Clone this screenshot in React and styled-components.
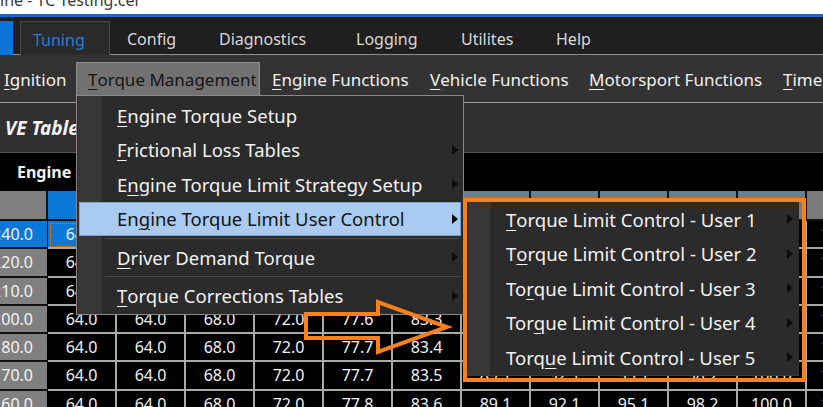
import React from 'react';
import styled, { createGlobalStyle } from 'styled-components';

// global
const GlobalStyle = createGlobalStyle`
    html, body {
        margin: 0;
        padding: 0;
        background: #2f2f2f;
    }
    body {
        font-family: "Noto Sans", "Open Sans", sans-serif;
    }
`;

// layout
const Page = styled.div`
    position: relative;
    width: 823px;
    height: 407px;
    overflow: hidden;
    background: #2f2f2f;
    display: flex;
    flex-direction: column;
`;

const TitleBar = styled.div`
    flex: none;
    height: 14px;
    background: #ffffff;
    overflow: hidden;
    color: #3a3a3a;
    font-size: 16px;
    line-height: 14px;

    span {
        display: block;
        margin-top: -7px;
        white-space: nowrap;
    }
`;

const AccentLine = styled.div`
    flex: none;
    height: 3px;
    background: #1b6ac9;
`;

// tabs
const TabBar = styled.div`
    flex: none;
    height: 38px;
    box-sizing: border-box;
    display: flex;
    align-items: flex-end;
    background: #1f1f1f;
    border-bottom: 1px solid #8e8e8e;
`;

const AppButton = styled.div`
    width: 13px;
    height: 34px;
    margin: 0 7px -1px 0;
    background: #0a74da;
`;

const Tab = styled.div`
    box-sizing: border-box;
    width: ${p => p.$w}px;
    height: 34px;
    padding: 3px 0 0 ${p => p.$pl || 12}px;
    display: flex;
    align-items: center;
    font-size: 16px;
    color: ${p => (p.$active ? '#2a7fd4' : '#d8d8d8')};
    background: ${p => (p.$active ? '#2a2a2a' : 'transparent')};
    border: 1px solid ${p => (p.$active ? '#474747' : 'transparent')};
    border-bottom: none;
    margin-bottom: ${p => (p.$active ? '-1px' : '0')};
    white-space: nowrap;
`;

// ribbon
const Ribbon = styled.div`
    flex: none;
    height: 48px;
    box-sizing: border-box;
    padding-top: 7px;
    display: flex;
    align-items: flex-start;
    background: #333333;
    border-bottom: 1px solid #9c9c9c;
    margin-left: -8px;
`;

const RibbonItem = styled.div`
    box-sizing: border-box;
    flex: none;
    width: ${p => (p.$w ? `${p.$w}px` : 'auto')};
    height: 34px;
    padding-left: 11px;
    display: flex;
    align-items: center;
    font-size: 17px;
    white-space: nowrap;
    color: ${p => (p.$active ? '#151515' : '#f0f0f0')};
    background: ${p => (p.$active ? '#727272' : 'transparent')};
    border: 1px solid ${p => (p.$active ? '#8f8f8f' : 'transparent')};
    border-bottom: none;
`;

const TableTitle = styled.div`
    flex: none;
    height: 50px;
    box-sizing: border-box;
    padding-left: 5px;
    display: flex;
    align-items: center;
    background: #303030;
    border-bottom: 1px solid #555555;
    color: #f4f4f4;
    font-size: 19px;
    font-weight: bold;
    font-style: italic;
`;

const AxisBar = styled.div`
    flex: none;
    height: 38px;
    padding-left: 17px;
    display: flex;
    align-items: center;
    background: #000000;
    color: #f4f4f4;
    font-size: 16px;
    font-weight: bold;
`;

// table
const Grid = styled.div`
    flex: none;
    width: 876px;
    display: grid;
    grid-template-columns: 48px repeat(12, 69px);
    grid-template-rows: 30px;
    grid-auto-rows: 28.25px;
    background: #000000;
    font-size: 16px;
`;

const HeadCell = styled.div`
    box-sizing: border-box;
    background: ${p => (p.$sel ? '#0a78d7' : p.$corner ? '#808080' : '#7b7b7b')};
    border-right: 2px solid #111111;
    border-bottom: 2px solid #111111;
`;

const RowHead = styled.div`
    box-sizing: border-box;
    overflow: hidden;
    display: flex;
    align-items: center;
    justify-content: flex-end;
    padding-right: 14px;
    background: ${p => (p.$sel ? '#0a78d7' : '#808080')};
    border-right: 1px solid #000000;
    border-bottom: 2px solid #101010;
    color: #f2f2f2;
    white-space: nowrap;
`;

const Cell = styled.div`
    box-sizing: border-box;
    display: flex;
    align-items: center;
    justify-content: center;
    background: ${p => (p.$sel ? '#0a78d7' : '#000000')};
    border-right: 2px solid #a8a8a8;
    border-bottom: 2px solid #a8a8a8;
    outline: ${p => (p.$sel ? '1px dotted #c7863c' : 'none')};
    outline-offset: -3px;
    color: ${p => (p.$dim ? '#2440a8' : '#f2f2f2')};
`;

// menus
const Menu = styled.div`
    position: absolute;
    left: 76px;
    top: 95px;
    z-index: 3;
    width: 388px;
    box-sizing: border-box;
    padding: 2px 0 1px;
    background: linear-gradient(to right, #2b2b2b 0 1px, #373737 1px 25px, #2b2b2b 25px);
    border: 1px solid #8e8585;
`;

const MenuItem = styled.div`
    box-sizing: border-box;
    height: 34.5px;
    margin: 0 ${p => (p.$active ? '2px' : '0')};
    padding: 0 ${p => (p.$active ? '2px' : '5px')} 0 ${p => (p.$active ? '37px' : '40px')};
    display: flex;
    align-items: center;
    font-size: 18.5px;
    white-space: nowrap;
    color: ${p => (p.$active ? '#141414' : '#f2f2f2')};
    background: ${p => (p.$active ? '#a9cbf1' : 'transparent')};
    border: ${p => (p.$active ? '1px solid #7ea2d4' : 'none')};
`;

const Separator = styled.div`
    height: 1px;
    margin: 1.5px 3px 1.5px 28px;
    background: #4a4a4a;
`;

const SubArrow = styled.span`
    margin-left: auto;
    width: 0;
    height: 0;
    border-left: 6px solid #0c0c0c;
    border-top: 5px solid transparent;
    border-bottom: 5px solid transparent;
`;

const Highlight = styled.div`
    position: absolute;
    left: 463px;
    top: 198px;
    z-index: 4;
    width: 343px;
    height: 184px;
    box-sizing: border-box;
    border: 4px solid #f7811f;
`;

const SubMenu = styled.div`
    width: 332px;
    background: linear-gradient(to right, #2b2b2b 0 1px, #373737 1px 23px, #2b2b2b 23px);
    border-bottom: 1px solid #3c3c3c;
`;

const SubItem = styled.div`
    box-sizing: border-box;
    height: 34.5px;
    padding: 0 6px 0 39px;
    display: flex;
    align-items: center;
    font-size: 18.5px;
    white-space: nowrap;
    color: #f2f2f2;
`;

const Annotation = styled.svg`
    position: absolute;
    left: 0;
    top: 0;
    z-index: 5;
    pointer-events: none;
`;

const Key = styled.span`
    text-decoration: underline;
    text-decoration-thickness: 1px;
    text-underline-offset: 3px;
`;

// data
const tabs = [
    { label: 'Tuning', w: 90, active: true },
    { label: 'Config', w: 96, pl: 16 },
    { label: 'Diagnostics', w: 137 },
    { label: 'Logging', w: 105 },
    { label: 'Utilites', w: 95 },
    { label: 'Help', w: 80 },
];

const ribbon = [
    { label: 'Ignition', k: 0, w: 84 },
    { label: 'Torque Management', k: 0, w: 184, active: true },
    { label: 'Engine Functions', k: 0, w: 158 },
    { label: 'Vehicle Functions', k: 0, w: 159 },
    { label: 'Motorsport Functions', k: 0, w: 194 },
    { label: 'Timers', k: 0 },
];

const menu = [
    { label: 'Engine Torque Setup', k: 0 },
    { label: 'Frictional Loss Tables', k: 0, sub: true },
    { label: 'Engine Torque Limit Strategy Setup', k: 1, sub: true },
    { label: 'Engine Torque Limit User Control', k: 2, sub: true, active: true },
    { sep: true },
    { label: 'Driver Demand Torque', k: 0, sub: true },
    { sep: true },
    { label: 'Torque Corrections Tables', k: 0, sub: true },
];

const subMenu = [0, 1, 2, 3, 4].map(i => ({ label: `Torque Limit Control - User ${i + 1}`, k: i }));

const cols = ['500', '750', '1000', '1250', '1500', '1750', '2000', '2500', '3000', '3500', '4000', '4500'];

const tail = [89.1, 92.1, 95.1, 98.2, 100.0, 100.0];
const rows = [
    { load: '240.0', v: [64.0, 64.0, 68.0, 72.0, 77.6, 83.2, 89.0, 92.0, 95.0, 98.1, 100.0, 100.0] },
    { load: '220.0', v: [64.0, 64.0, 68.0, 72.0, 77.6, 83.2, 89.0, 92.0, 95.0, 98.1, 100.0, 100.0] },
    { load: '210.0', v: [64.0, 64.0, 68.0, 72.0, 77.6, 83.2, 89.0, 92.0, 95.0, 98.1, 100.0, 100.0] },
    { load: '200.0', v: [64.0, 64.0, 68.0, 72.0, 77.6, 83.3, 89.0, 92.0, 95.0, 98.1, 100.0, 100.0] },
    { load: '180.0', v: [64.0, 64.0, 68.0, 72.0, 77.7, 83.4, 89.0, 92.1, 95.1, 98.2, 100.0, 100.0] },
    { load: '170.0', v: [64.0, 64.0, 68.0, 72.0, 77.7, 83.5, ...tail] },
    { load: '160.0', v: [64.0, 64.0, 68.0, 72.0, 77.8, 83.6, ...tail] },
];

function Label({ text, k }) {
    if (k == null) return text;
    return <>{text.slice(0, k)}<Key>{text[k]}</Key>{text.slice(k + 1)}</>;
}

export default function App() {
    return <>
        <GlobalStyle />
        <Page>
            <TitleBar><span>ine - TC Testing.cer</span></TitleBar>
            <AccentLine />

            <TabBar>
                <AppButton />
                {tabs.map(t => (
                    <Tab key={t.label} $w={t.w} $pl={t.pl} $active={t.active}>{t.label}</Tab>
                ))}
            </TabBar>

            <Ribbon>
                {ribbon.map(r => (
                    <RibbonItem key={r.label} $w={r.w} $active={r.active}>
                        <Label text={r.label} k={r.k} />
                    </RibbonItem>
                ))}
            </Ribbon>

            <TableTitle>VE Table</TableTitle>
            <AxisBar>Engine Speed (RPM)</AxisBar>

            <Grid>
                <HeadCell $corner />
                {cols.map((c, i) => <HeadCell key={c} $sel={i === 0} title={c} />)}
                {rows.map((r, ri) => (
                    <React.Fragment key={r.load}>
                        <RowHead $sel={ri === 0}>{r.load}</RowHead>
                        {r.v.map((v, ci) => (
                            <Cell key={ci} $sel={ri === 0 && ci === 0} $dim={ci === 11}>{v.toFixed(1)}</Cell>
                        ))}
                    </React.Fragment>
                ))}
            </Grid>

            <Menu>
                {menu.map((m, i) => m.sep
                    ? <Separator key={i} />
                    : <MenuItem key={i} $active={m.active}>
                        <Label text={m.label} k={m.k} />
                        {m.sub && <SubArrow />}
                    </MenuItem>
                )}
            </Menu>

            <Highlight>
                <SubMenu>
                    {subMenu.map(s => (
                        <SubItem key={s.label}>
                            <Label text={s.label} k={s.k} />
                            <SubArrow />
                        </SubItem>
                    ))}
                </SubMenu>
            </Highlight>

            <Annotation width="823" height="407" viewBox="0 0 823 407">
                <polygon
                    points="306,314 378,314 378,302 447,327 378,352 378,338 306,338"
                    fill="none"
                    stroke="#f7811f"
                    strokeWidth="4"
                    strokeLinejoin="miter"
                />
            </Annotation>
        </Page>
    </>;
}
